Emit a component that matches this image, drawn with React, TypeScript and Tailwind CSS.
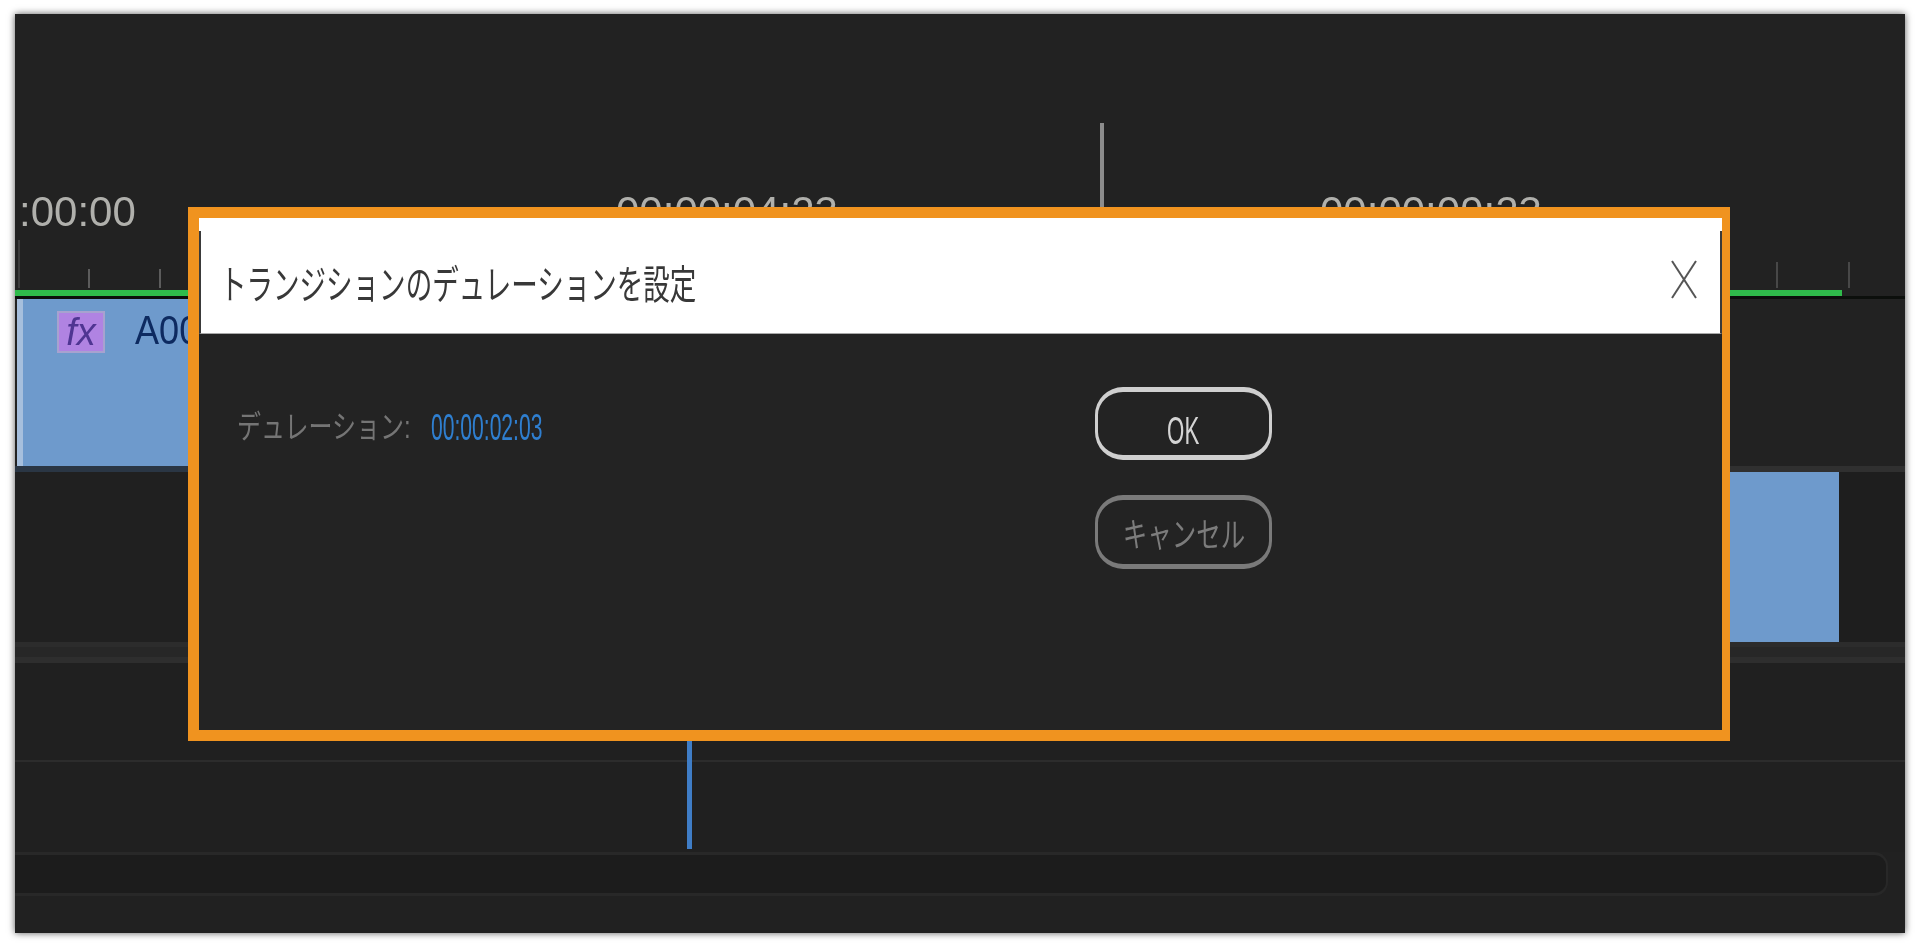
export default function App() {
  const jp = "font-['Liberation_Sans','Noto_Sans_CJK_JP',sans-serif]";
  const time = "text-[42px] leading-[30px] text-[#b0b0ac] font-['Liberation_Sans',sans-serif] whitespace-nowrap blur-[0.6px]";
  return (
    <div className="w-[1920px] h-[949px] overflow-hidden bg-white pt-[14px] pl-[15px]">
      <div className="relative w-[1890px] h-[919px] bg-[#222222] flex flex-col shadow-[0_0_7px_rgba(0,0,0,0.65)]">
        {/* gray playhead */}
        <div className="absolute left-[1085px] top-[109px] w-[4px] h-[90px] bg-[#8c8c8c] blur-[0.5px]" />

        {/* ruler */}
        <div className="h-[276px] pt-[183px] flex flex-col shrink-0">
          <div className="flex pl-[4px] h-[30px]">
            <span className={`w-[597px] ${time}`}>:00:00</span>
            <span className={`w-[704px] ${time}`}>00:00:04:23</span>
            <span className={time}>00:00:09:23</span>
          </div>
          <div className="flex items-end h-[63px] pb-[2px]">
            <div className="ml-[3px] w-[2px] h-[48px] bg-[#3c3c3c] blur-[0.6px]" />
            <div className="ml-[68px] w-[2px] h-[19px] bg-[#5c5c5c] blur-[0.6px]" />
            <div className="ml-[69px] w-[2px] h-[19px] bg-[#5c5c5c] blur-[0.6px]" />
            <div className="ml-[1615px] w-[2px] h-[26px] bg-[#484848] blur-[0.6px]" />
            <div className="ml-[70px] w-[2px] h-[26px] bg-[#484848] blur-[0.6px]" />
          </div>
        </div>

        {/* work area bar */}
        <div className="h-[6px] w-[1827px] bg-[#2fbb4b] shrink-0 blur-[0.3px]" />
        <div className="h-[3px] bg-[#0c0f0c] shrink-0" />

        {/* track 1 */}
        <div className="h-[167px] shrink-0 flex pl-[2px]">
          <div className="w-[700px] h-full bg-[#6e9acc] flex items-start overflow-hidden">
            <div className="w-[6px] h-full bg-[#a6bfdd] shrink-0" />
            <div className="ml-[34px] mt-[12px] w-[48px] h-[42px] bg-[#b083e2] border-2 border-[#a7a2cf] flex items-center justify-center shrink-0 blur-[0.4px]">
              <span className="italic text-[38px] leading-none text-[#4f3592] font-['Liberation_Sans',sans-serif]">fx</span>
            </div>
            <span className="ml-[30px] mt-[14px] text-[41px] leading-[34px] text-[#0d2a60] origin-left scale-x-[0.88] font-['Liberation_Sans',sans-serif] blur-[0.5px]">A00</span>
          </div>
        </div>
        <div className="h-[6px] shrink-0 flex">
          <div className="w-[700px] bg-[#2a3644]" />
          <div className="flex-1 bg-[#303030]" />
        </div>

        {/* track 2 */}
        <div className="h-[170px] shrink-0 flex bg-[#202020]">
          <div className="ml-[900px] w-[924px] h-full bg-[#6e9acc]" />
          <div className="flex-1 bg-[#1e1e1e]" />
        </div>

        {/* separators */}
        <div className="h-[5px] bg-[#2c2c2c] shrink-0" />
        <div className="h-[10px] bg-[#272727] shrink-0" />
        <div className="h-[6px] bg-[#2e2e2e] shrink-0" />
        <div className="h-[97px] bg-[#202020] shrink-0" />
        <div className="h-[2px] bg-[#2c2c2c] shrink-0" />
        <div className="h-[90px] bg-[#202020] shrink-0" />

        {/* scroll bar */}
        <div className="flex-1 bg-[#212121]">
          <div className="h-[44px] mr-[17px] bg-[#1c1c1c] border-y-[3px] border-r-[2px] border-[#282828] rounded-r-[14px]" />
        </div>

        {/* blue playhead */}
        <div className="absolute left-[672px] top-[726px] w-[5px] h-[109px] bg-[#3f7dc6] blur-[0.5px]" />

        {/* dialog */}
        <div className="absolute left-[173px] top-[193px] w-[1542px] h-[534px] border-y-[11px] border-l-[11px] border-r-[8px] border-[#f0931f] bg-[#232323] flex flex-col">
          <div className="h-[13px] bg-white shrink-0" />
          <div className="h-[103px] bg-white border-x-2 border-[#3a3a3a] border-b border-b-[#a8a8a8] flex items-start justify-between pl-[19px] pr-[22px] shrink-0">
            <span className={`mt-[32px] text-[40px] leading-[44px] text-[#383838] whitespace-nowrap origin-left scale-x-[0.663] blur-[0.4px] ${jp}`}>
              トランジションのデュレーションを設定
            </span>
            <svg width="28" height="39" viewBox="0 0 28 39" className="mt-[29px]" fill="none" stroke="#555555" strokeWidth="2">
              <path d="M2 1 L26 38" />
              <path d="M26 1 L2 38" />
            </svg>
          </div>
          <div className="flex-1 flex">
            <div className="w-[896px] pl-[38px] pt-[73px] flex items-start shrink-0">
              <span className={`w-[194px] mt-[2px] text-[32px] leading-[36px] text-[#757575] whitespace-nowrap origin-left scale-x-[0.75] blur-[0.4px] ${jp}`}>
                デュレーション:
              </span>
              <span className="text-[37px] leading-[32px] mt-[5px] text-[#2f7fd0] whitespace-nowrap origin-left scale-x-[0.57] blur-[0.4px] font-['Liberation_Sans',sans-serif]">
                00:00:02:03
              </span>
            </div>
            <div className="pt-[53px] flex flex-col gap-[35px]">
              <div className="w-[177px] h-[73px] rounded-[28px] border-x-[3px] border-y-[5px] border-[#cfcfcf] flex items-center justify-center blur-[0.5px]">
                <span className="text-[39px] leading-none mt-[13px] text-[#d4d4d4] scale-x-[0.57] font-['Liberation_Sans',sans-serif]">OK</span>
              </div>
              <div className="w-[177px] h-[74px] rounded-[28px] border-x-[3px] border-y-[5px] border-[#7a7a7a] flex items-center justify-center blur-[0.5px]">
                <span className={`text-[34px] leading-none mt-[5px] text-[#7c7c7c] whitespace-nowrap scale-x-[0.72] ${jp}`}>キャンセル</span>
              </div>
            </div>
          </div>
        </div>
      </div>
    </div>
  );
}
